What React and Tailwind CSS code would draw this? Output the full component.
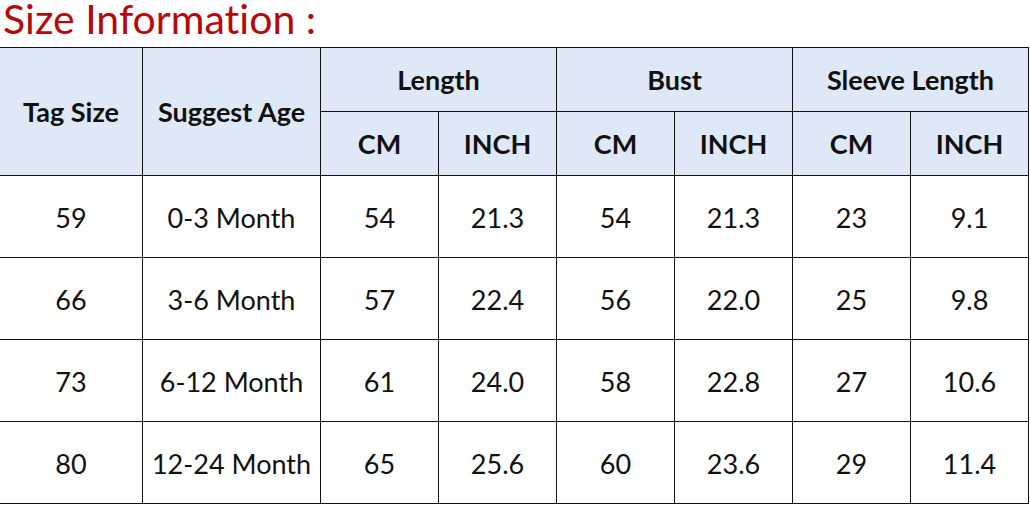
import React from "react";

const rows = [
  ["59", "0-3 Month", "54", "21.3", "54", "21.3", "23", "9.1"],
  ["66", "3-6 Month", "57", "22.4", "56", "22.0", "25", "9.8"],
  ["73", "6-12 Month", "61", "24.0", "58", "22.8", "27", "10.6"],
  ["80", "12-24 Month", "65", "25.6", "60", "23.6", "29", "11.4"],
];

const head = "flex items-center justify-center pt-[2px] border-r border-b border-[#111] bg-[#dfe8f7] font-bold text-[27px] text-[#111]";
const cell = "flex items-center justify-center pt-[3px] border-r border-b border-[#111] text-[27px] text-[#111]";

export default function App() {
  return (
    <div className="w-[1030px] h-[505px] bg-white overflow-hidden [font-variant-ligatures:none]" style={{ fontFamily: "Lato, 'Open Sans', sans-serif" }}>
      <div className="h-[47px] pl-[3px] text-[41px] leading-[38px] text-[#b50a0a] [font-variant-ligatures:none]">Size Information :</div>
      <div className="grid grid-cols-[143px_178px_repeat(6,118px)] grid-rows-[64px_64px_repeat(4,82px)] w-[1029px] border-t border-[#111]">
        <div className={`${head} row-span-2`}>Tag Size</div>
        <div className={`${head} row-span-2`}>Suggest Age</div>
        <div className={`${head} col-span-2`}>Length</div>
        <div className={`${head} col-span-2`}>Bust</div>
        <div className={`${head} col-span-2`}>Sleeve Length</div>
        <div className={head}>CM</div>
        <div className={head}>INCH</div>
        <div className={head}>CM</div>
        <div className={head}>INCH</div>
        <div className={head}>CM</div>
        <div className={head}>INCH</div>
        {rows.map((r, i) =>
          r.map((v, j) => (
            <div key={`${i}-${j}`} className={cell}>
              {v}
            </div>
          ))
        )}
      </div>
    </div>
  );
}
